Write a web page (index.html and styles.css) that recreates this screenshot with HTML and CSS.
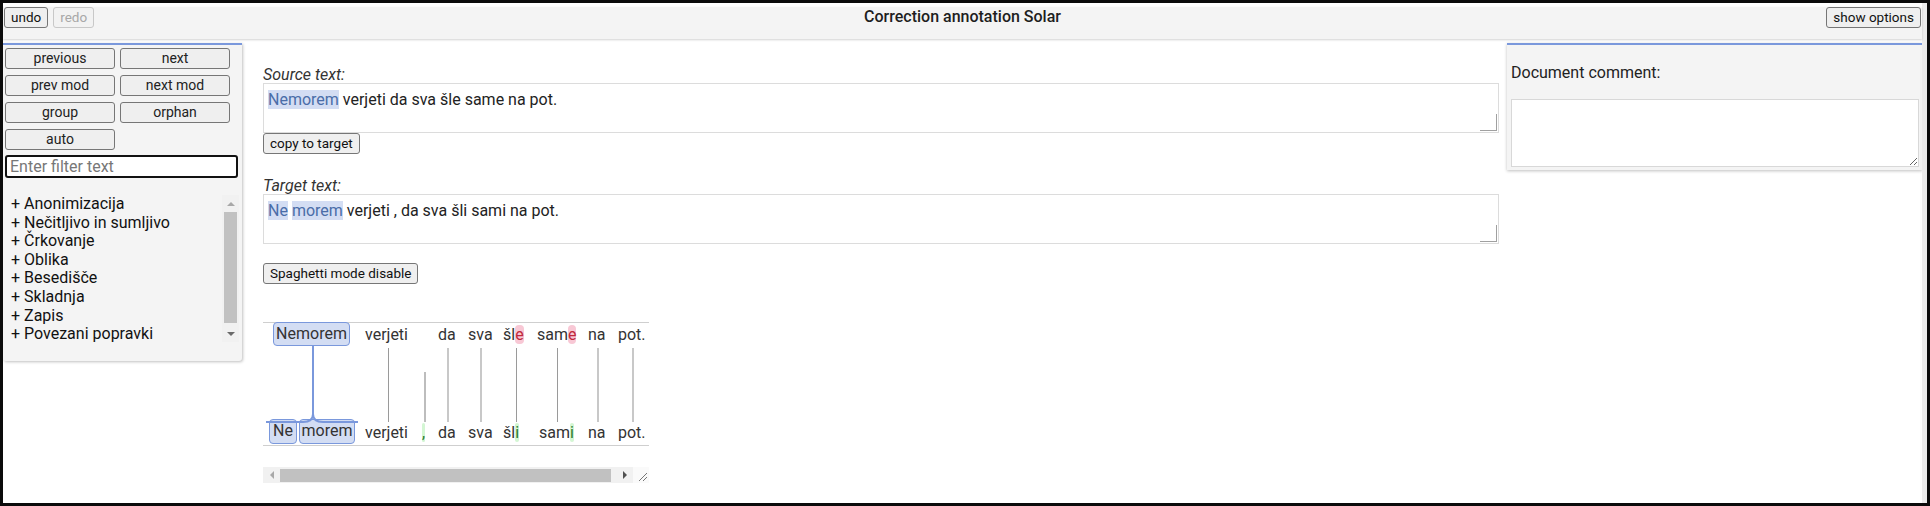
FILE: index.html
```html
<!DOCTYPE html>
<html lang="sl">
<head>
<meta charset="utf-8">
<title>Correction annotation Solar</title>
<link rel="stylesheet" href="styles.css">
</head>
<body>
<div class="frame">
  <div class="page">
    <header class="topbar">
      <div class="tb-left">
        <button class="btn">undo</button>
        <button class="btn" disabled>redo</button>
      </div>
      <div class="title">Correction annotation Solar</div>
      <div class="tb-right"><button class="btn">show options</button></div>
    </header>
    <div class="main">
      <aside class="leftpanel">
        <div class="btn-grid">
          <button class="pbtn">previous</button>
          <button class="pbtn">next</button>
          <button class="pbtn">prev mod</button>
          <button class="pbtn">next mod</button>
          <button class="pbtn">group</button>
          <button class="pbtn">orphan</button>
          <button class="pbtn">auto</button>
        </div>
        <input class="filter" type="text" placeholder="Enter filter text">
        <div class="catbox">
          <ul class="cats">
            <li>+ Anonimizacija</li>
            <li>+ Nečitljivo in sumljivo</li>
            <li>+ Črkovanje</li>
            <li>+ Oblika</li>
            <li>+ Besedišče</li>
            <li>+ Skladnja</li>
            <li>+ Zapis</li>
            <li>+ Povezani popravki</li>
          </ul>
          <div class="vscroll">
            <div class="vbtn"><span class="tri-up"></span></div>
            <div class="vthumb"></div>
            <div class="vbtn vbtn-down"><span class="tri-down"></span></div>
          </div>
        </div>
      </aside>

      <section class="center">
        <div class="label">Source text:</div>
        <div class="textbox"><span class="hl">Nemorem</span> verjeti da sva šle same na pot.</div>
        <button class="btn">copy to target</button>

        <div class="label label-target">Target text:</div>
        <div class="textbox"><span class="hl">Ne</span> <span class="hl">morem</span> verjeti , da sva šli sami na pot.</div>
        <button class="btn btn-spag">Spaghetti mode disable</button>

        <div class="spag">
          <div class="tok box" style="left:10px;top:-1px;width:77px;height:24px;">Nemorem</div>
          <div class="tok" style="left:102px;top:2px;">verjeti</div>
          <div class="tok" style="left:175px;top:2px;">da</div>
          <div class="tok" style="left:205px;top:2px;">sva</div>
          <div class="tok" style="left:240px;top:2px;">šl<span class="del">e</span></div>
          <div class="tok" style="left:274px;top:2px;">sam<span class="del">e</span></div>
          <div class="tok" style="left:325px;top:2px;">na</div>
          <div class="tok" style="left:355px;top:2px;">pot.</div>

          <div class="tok box" style="left:6px;top:96px;width:28px;height:25px;">Ne</div>
          <div class="tok box" style="left:36px;top:96px;width:56px;height:25px;">morem</div>
          <div class="tok" style="left:102px;top:100px;">verjeti</div>
          <div class="tok" style="left:159px;top:100px;"><span class="ins">,</span></div>
          <div class="tok" style="left:175px;top:100px;">da</div>
          <div class="tok" style="left:205px;top:100px;">sva</div>
          <div class="tok" style="left:240px;top:100px;">šl<span class="ins">i</span></div>
          <div class="tok" style="left:276px;top:100px;">sam<span class="ins">i</span></div>
          <div class="tok" style="left:325px;top:100px;">na</div>
          <div class="tok" style="left:355px;top:100px;">pot.</div>

          <svg class="links" width="386" height="122" viewBox="0 0 386 122">
            <line x1="125.5" y1="25" x2="125.5" y2="99" stroke="#9a9a9a" stroke-width="1"/>
            <line x1="162" y1="49" x2="162" y2="99" stroke="#bdbdbd" stroke-width="2"/>
            <line x1="185" y1="25" x2="185" y2="99" stroke="#c8c8c8" stroke-width="2"/>
            <line x1="218" y1="25" x2="218" y2="99" stroke="#c8c8c8" stroke-width="2"/>
            <line x1="253.5" y1="25" x2="253.5" y2="99" stroke="#9a9a9a" stroke-width="1"/>
            <line x1="294.5" y1="25" x2="294.5" y2="99" stroke="#9a9a9a" stroke-width="1"/>
            <line x1="335" y1="25" x2="335" y2="99" stroke="#c8c8c8" stroke-width="2"/>
            <line x1="370" y1="25" x2="370" y2="99" stroke="#c8c8c8" stroke-width="2"/>
            <path d="M50 23 V91 Q50 99 40 99 H3 M50 91 Q50 99 60 99 H95" fill="none" stroke="#7a98dc" stroke-width="2"/>
          </svg>
        </div>

        <div class="hscroll">
          <div class="hbtn"><span class="tri-left"></span></div>
          <div class="hthumb"></div>
          <div class="hgap"></div>
          <div class="hbtn"><span class="tri-right"></span></div>
          <div class="hcorner">
            <svg width="16" height="16" viewBox="0 0 16 16">
              <line x1="14" y1="6" x2="6" y2="14" stroke="#777" stroke-width="1"/>
              <line x1="14" y1="10" x2="10" y2="14" stroke="#777" stroke-width="1"/>
            </svg>
          </div>
        </div>
      </section>

      <aside class="rightpanel">
        <div class="doc-label">Document comment:</div>
        <textarea class="doc-comment"></textarea>
      </aside>
    </div>
  </div>
  <div class="vstrip"></div>
</div>
</body>
</html>
```

FILE: styles.css
```css
* {
  box-sizing: border-box;
}

html, body {
  margin: 0;
  padding: 0;
  background: #fff;
}

body {
  font-family: Roboto, "Liberation Sans", sans-serif;
  font-size: 16px;
  color: #222;
}

.frame {
  width: 1930px;
  height: 506px;
  border: 3px solid #0b0b0b;
  display: flex;
  overflow: hidden;
}

.page {
  flex: 1;
  min-width: 0;
  display: flex;
  flex-direction: column;
}

.vstrip {
  width: 5px;
  background: #ececec;
}

/* top bar */
.topbar {
  margin-top: 4px;
  height: 32px;
  background: #f4f4f4;
  box-shadow: 0 1px 2px rgba(0, 0, 0, 0.18);
  display: grid;
  grid-template-columns: 1fr auto 1fr;
  align-items: start;
  padding: 0 1px;
  position: relative;
  z-index: 1;
}

.tb-left {
  display: flex;
  gap: 5px;
}

.tb-right {
  justify-self: end;
}

.title {
  line-height: 20px;
  font-size: 16px;
  font-weight: 500;
  color: #1e1e1e;
}

.btn {
  font-family: Roboto, "Liberation Sans", sans-serif;
  font-size: 13.5px;
  height: 21px;
  padding: 0 6px;
  border: 1px solid #767676;
  border-radius: 3px;
  background: #efefef;
  color: #111;
  line-height: 19px;
  cursor: pointer;
}

.btn:disabled {
  color: #a8a8a8;
  border-color: #c8c8c8;
  background: #f2f2f2;
}

/* main area */
.main {
  display: grid;
  grid-template-columns: 239px 1fr 415px;
  align-items: start;
  margin-top: 4px;
}

.leftpanel {
  background: #f4f4f4;
  border-top: 2px solid #7a98dc;
  box-shadow: 1px 1px 3px rgba(0, 0, 0, 0.25);
  border-radius: 0 0 3px 3px;
  padding: 3px 3px 19px 2px;
}

.btn-grid {
  display: grid;
  grid-template-columns: 110px 110px;
  column-gap: 5px;
  row-gap: 6px;
}

.pbtn {
  height: 21px;
  font-family: Roboto, "Liberation Sans", sans-serif;
  font-size: 14px;
  color: #222;
  background: #efefef;
  border: 1px solid #767676;
  border-radius: 3px;
  padding: 0;
  line-height: 19px;
}

.filter {
  display: block;
  margin-top: 5px;
  width: 233px;
  height: 23px;
  border: 2px solid #111;
  border-radius: 3px;
  padding: 0 3px;
  font-family: Roboto, "Liberation Sans", sans-serif;
  font-size: 16px;
  background: #fff;
  outline: none;
}

.filter::placeholder {
  color: #777;
}

.catbox {
  margin-top: 17px;
  height: 147px;
  width: 234px;
  display: flex;
}

.cats {
  flex: 1;
  list-style: none;
  margin: 0;
  padding: 0 0 0 6px;
  font-size: 16px;
  line-height: 18.6px;
  font-weight: 400;
  color: #111;
}

.vscroll {
  width: 17px;
  background: #f1f1f1;
  display: flex;
  flex-direction: column;
  align-items: center;
}

.vbtn {
  height: 17px;
  width: 17px;
  display: flex;
  align-items: center;
  justify-content: center;
}

.vbtn-down {
  margin-top: auto;
}

.tri-up {
  width: 0;
  height: 0;
  border-left: 4px solid transparent;
  border-right: 4px solid transparent;
  border-bottom: 4px solid #a8a8a8;
}

.tri-down {
  width: 0;
  height: 0;
  border-left: 4px solid transparent;
  border-right: 4px solid transparent;
  border-top: 4px solid #6a6a6a;
}

.vthumb {
  width: 13px;
  height: 111px;
  background: #c1c1c1;
}

/* center column */
.center {
  padding: 23px 8px 0 21px;
}

.label {
  font-style: italic;
  line-height: 17px;
  color: #333;
}

.label-target {
  margin-top: 23px;
}

.textbox {
  height: 50px;
  border: 1px solid #dcdcdc;
  padding: 6px 4px;
  line-height: 19px;
  color: #222;
  position: relative;
}

.textbox::after {
  content: "";
  position: absolute;
  right: 1px;
  bottom: 1px;
  width: 16px;
  height: 16px;
  border-right: 1px solid #a0a0a0;
  border-bottom: 1px solid #a0a0a0;
}

.hl {
  background: #d3ddf3;
  color: #4a6da8;
}

.btn-spag {
  margin-top: 19px;
}

.spag {
  position: relative;
  width: 386px;
  height: 124px;
  margin-top: 38px;
  border-top: 1px solid #cfcfcf;
  border-bottom: 1px solid #cfcfcf;
}

.tok {
  position: absolute;
  line-height: 20px;
  color: #333;
  white-space: nowrap;
}

.box {
  border: 1px solid #7a98dc;
  background: #d3ddf3;
  border-radius: 4px;
  text-align: center;
  line-height: 22px;
}

.del {
  background: #f8c8d5;
  color: #c0283c;
  border-radius: 4px;
}

.ins {
  background: #d3f6d3;
  color: #2d7a2d;
  border-radius: 3px;
}

.links {
  position: absolute;
  left: 0;
  top: 0;
  overflow: visible;
  pointer-events: none;
}

.hscroll {
  margin-top: 21px;
  width: 386px;
  height: 16px;
  display: flex;
  background: #f1f1f1;
}

.hbtn {
  width: 17px;
  height: 16px;
  display: flex;
  align-items: center;
  justify-content: center;
}

.tri-left {
  width: 0;
  height: 0;
  border-top: 4px solid transparent;
  border-bottom: 4px solid transparent;
  border-right: 4px solid #a8a8a8;
}

.tri-right {
  width: 0;
  height: 0;
  border-top: 4px solid transparent;
  border-bottom: 4px solid transparent;
  border-left: 4px solid #505050;
}

.hthumb {
  width: 331px;
  height: 13px;
  margin-top: 2px;
  background: #c1c1c1;
}

.hgap {
  width: 5px;
}

.hcorner {
  width: 16px;
  height: 16px;
  background: #fafafa;
}

.hcorner svg {
  display: block;
}

/* right panel */
.rightpanel {
  background: #f4f4f4;
  border-top: 2px solid #7a98dc;
  box-shadow: 0 1px 3px rgba(0, 0, 0, 0.25);
  padding: 18px 3px 3px 4px;
}

.doc-label {
  line-height: 19px;
  color: #222;
}

.doc-comment {
  display: block;
  margin-top: 17px;
  width: 408px;
  height: 68px;
  border: 1px solid #d8d8d8;
  background: #fff;
  font-family: Roboto, "Liberation Sans", sans-serif;
  font-size: 14px;
  resize: both;
}
```
